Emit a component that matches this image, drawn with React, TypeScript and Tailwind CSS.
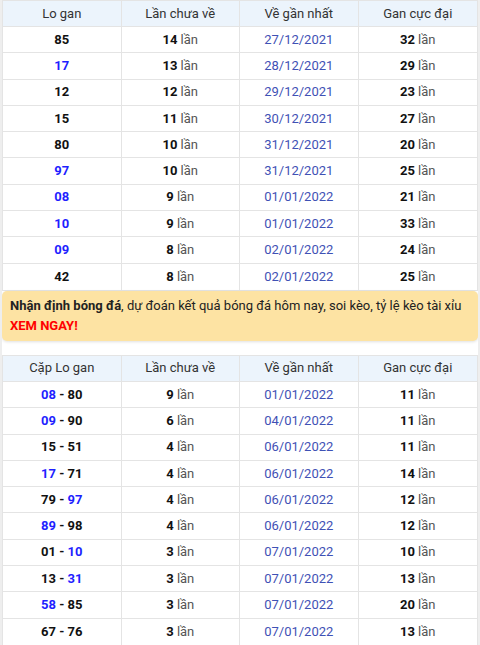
type Num = { v: string; hot?: boolean };

const table1: [Num, string, string, string][] = [
  [{ v: "85" }, "14", "27/12/2021", "32"],
  [{ v: "17", hot: true }, "13", "28/12/2021", "29"],
  [{ v: "12" }, "12", "29/12/2021", "23"],
  [{ v: "15" }, "11", "30/12/2021", "27"],
  [{ v: "80" }, "10", "31/12/2021", "20"],
  [{ v: "97", hot: true }, "10", "31/12/2021", "25"],
  [{ v: "08", hot: true }, "9", "01/01/2022", "21"],
  [{ v: "10", hot: true }, "9", "01/01/2022", "33"],
  [{ v: "09", hot: true }, "8", "02/01/2022", "24"],
  [{ v: "42" }, "8", "02/01/2022", "25"],
];

const table2: [Num, Num, string, string, string][] = [
  [{ v: "08", hot: true }, { v: "80" }, "9", "01/01/2022", "11"],
  [{ v: "09", hot: true }, { v: "90" }, "6", "04/01/2022", "11"],
  [{ v: "15" }, { v: "51" }, "4", "06/01/2022", "11"],
  [{ v: "17", hot: true }, { v: "71" }, "4", "06/01/2022", "14"],
  [{ v: "79" }, { v: "97", hot: true }, "4", "06/01/2022", "12"],
  [{ v: "89", hot: true }, { v: "98" }, "4", "06/01/2022", "12"],
  [{ v: "01" }, { v: "10", hot: true }, "3", "07/01/2022", "10"],
  [{ v: "13" }, { v: "31", hot: true }, "3", "07/01/2022", "13"],
  [{ v: "58", hot: true }, { v: "85" }, "3", "07/01/2022", "20"],
  [{ v: "67" }, { v: "76" }, "3", "07/01/2022", "13"],
];

function N({ n }: { n: Num }) {
  return (
    <span className={n.hot ? "font-bold text-[#1f1fff]" : "font-bold text-[#111]"}>
      {n.v}
    </span>
  );
}

function Times({ count }: { count: string }) {
  return (
    <span>
      <span className="font-bold text-[#111]">{count}</span>{" "}
      <span className="text-[#555]">lần</span>
    </span>
  );
}

function Cell({ children, last }: { children: React.ReactNode; last?: boolean }) {
  return (
    <div
      className={
        "flex items-center justify-center " +
        (last ? "" : "border-r border-[#e4e4e4]")
      }
    >
      {children}
    </div>
  );
}

function Header({ first }: { first: string }) {
  return (
    <div className="grid grid-cols-4 h-[26px] bg-[#ecf4fc] border-b border-[#e4e4e4] text-[#333]">
      <Cell>{first}</Cell>
      <Cell>Lần chưa về</Cell>
      <Cell>Về gần nhất</Cell>
      <Cell last>Gan cực đại</Cell>
    </div>
  );
}

function Row({ cells, last }: { cells: React.ReactNode[]; last?: boolean }) {
  return (
    <div
      className={
        "grid grid-cols-4 h-[26.3px] " + (last ? "" : "border-b border-[#e4e4e4]")
      }
    >
      <Cell>{cells[0]}</Cell>
      <Cell>{cells[1]}</Cell>
      <Cell>{cells[2]}</Cell>
      <Cell last>{cells[3]}</Cell>
    </div>
  );
}

export default function App() {
  return (
    <div
      className="w-[480px] h-[645px] overflow-hidden bg-white border-x-2 border-[#eeeeee] text-[13px] leading-5"
      style={{ fontFamily: "Roboto, 'Liberation Sans', sans-serif" }}
    >
      <div className="border border-[#e4e4e4] bg-white">
        <Header first="Lo gan" />
        {table1.map((r, i) => (
          <Row
            key={i}
            last={i === table1.length - 1}
            cells={[
              <N n={r[0]} />,
              <Times count={r[1]} />,
              <span className="text-[#3f51b5]">{r[2]}</span>,
              <Times count={r[3]} />,
            ]}
          />
        ))}
      </div>

      <div className="rounded-[5px] bg-[#fde3a3] px-2 py-[5px] text-[#222] shadow-[0_1px_3px_rgba(0,0,0,0.12)]">
        <b>Nhận định bóng đá</b>, dự đoán kết quả bóng đá hôm nay, soi kèo, tỷ lệ kèo
        tài xỉu <b className="text-[#ff0000]">XEM NGAY!</b>
      </div>

      <div className="mt-[14px] border border-[#e4e4e4] bg-white">
        <Header first="Cặp Lo gan" />
        {table2.map((r, i) => (
          <Row
            key={i}
            last={i === table2.length - 1}
            cells={[
              <span>
                <N n={r[0]} /> <span className="font-bold text-[#111]">-</span>{" "}
                <N n={r[1]} />
              </span>,
              <Times count={r[2]} />,
              <span className="text-[#3f51b5]">{r[3]}</span>,
              <Times count={r[4]} />,
            ]}
          />
        ))}
      </div>
    </div>
  );
}
